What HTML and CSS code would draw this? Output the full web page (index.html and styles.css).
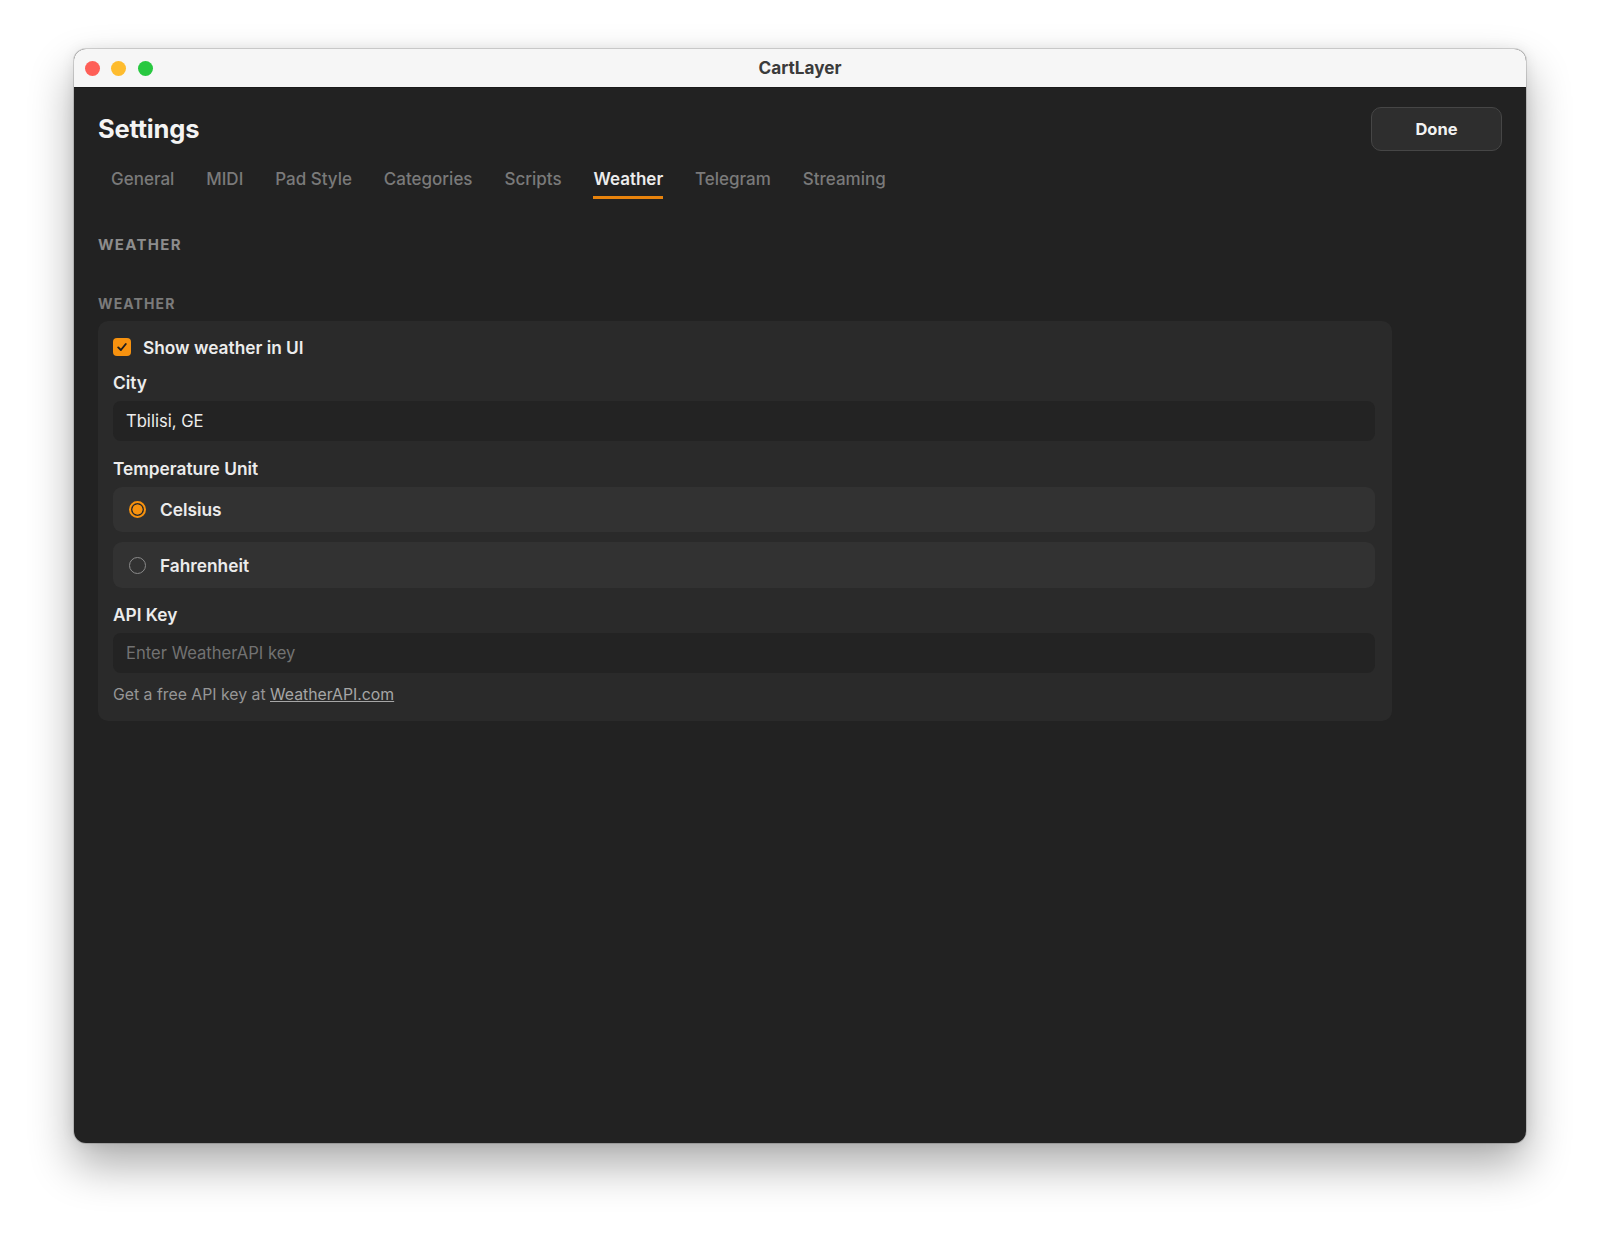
FILE: index.html
```html
<!DOCTYPE html>
<html lang="en">
<head>
<meta charset="utf-8">
<title>CartLayer</title>
<link rel="stylesheet" href="styles.css">
</head>
<body>
<div class="window">
  <div class="titlebar">
    <div class="lights">
      <span class="light red"></span>
      <span class="light yellow"></span>
      <span class="light green"></span>
    </div>
    <div class="wtitle">CartLayer</div>
  </div>
  <div class="content">
    <div class="header">
      <h1 class="title">Settings</h1>
      <button class="done">Done</button>
    </div>
    <nav class="tabs">
      <span class="tab">General</span>
      <span class="tab">MIDI</span>
      <span class="tab">Pad Style</span>
      <span class="tab">Categories</span>
      <span class="tab">Scripts</span>
      <span class="tab active">Weather</span>
      <span class="tab">Telegram</span>
      <span class="tab">Streaming</span>
    </nav>
    <div class="section-title">WEATHER</div>
    <div class="group-title">WEATHER</div>
    <div class="card">
      <label class="check-row">
        <span class="checkbox">
          <svg width="12" height="12" viewBox="0 0 12 12"><path d="M2.2 6.4 L4.9 9 L9.8 3" fill="none" stroke="#1e1e1e" stroke-width="1.9" stroke-linecap="round" stroke-linejoin="round"/></svg>
        </span>
        <span class="check-label">Show weather in UI</span>
      </label>
      <div class="label city-label">City</div>
      <div class="input">Tbilisi, GE</div>
      <div class="label temp-label">Temperature Unit</div>
      <div class="radio-row">
        <span class="radio on"></span>
        <span class="radio-label">Celsius</span>
      </div>
      <div class="radio-row second">
        <span class="radio"></span>
        <span class="radio-label">Fahrenheit</span>
      </div>
      <div class="label api-label">API Key</div>
      <div class="input placeholder">Enter WeatherAPI key</div>
      <div class="helper">Get a free API key at <a class="link">WeatherAPI.com</a></div>
    </div>
  </div>
</div>
</body>
</html>
```

FILE: styles.css
```css
html, body {
  margin: 0;
  padding: 0;
  background: #ffffff;
}
body {
  font-family: "Inter", "Liberation Sans", sans-serif;
  width: 1600px;
  height: 1241px;
  overflow: hidden;
}
.window {
  margin: 49px 0 0 74px;
  width: 1452px;
  height: 1094px;
  border-radius: 12px;
  overflow: hidden;
  background: #222222;
  box-shadow: 0 0 0 1px rgba(0,0,0,0.14), 0 22px 45px rgba(0,0,0,0.33), 0 0 14px rgba(0,0,0,0.08);
  display: flex;
  flex-direction: column;
}
.titlebar {
  height: 38px;
  background: #f6f6f6;
  border-bottom: 1px solid #1a1a1a;
  display: flex;
  align-items: center;
  position: relative;
  flex-shrink: 0;
}
.lights {
  display: flex;
  gap: 11.5px;
  margin-left: 10.5px;
  margin-top: 1px;
}
.light {
  width: 15px;
  height: 15px;
  border-radius: 50%;
}
.red { background: #fe5f57; }
.yellow { background: #febc2e; }
.green { background: #28c840; }
.wtitle {
  position: absolute;
  left: 0;
  right: 0;
  top: 9px;
  text-align: center;
  font-weight: 700;
  font-size: 17.2px;
  color: #3b3b3b;
  line-height: 20px;
}
.content {
  padding: 18px 24px 0 24px;
}
.header {
  display: flex;
  justify-content: space-between;
  align-items: center;
  height: 44px;
}
.title {
  margin: 1px 0 0 0;
  font-size: 25.5px;
  font-weight: 700;
  color: #f4f4f4;
  letter-spacing: -0.2px;
}
.done {
  width: 131px;
  height: 44px;
  margin-top: 1px;
  border-radius: 10px;
  background: #2e2e2e;
  border: 1px solid #464646;
  color: #f2f2f2;
  font-family: inherit;
  font-size: 16.5px;
  font-weight: 700;
}
.tabs {
  display: flex;
  margin-top: 18px;
}
.tab {
  padding: 0 15.95px 6px;
  font-size: 17px;
  line-height: 22px;
  color: #7a7a7a;
  font-weight: 500;
  border-bottom: 3px solid transparent;
}
.tabs .tab:first-child { padding-left: 13px; }
.tab.active {
  color: #ececec;
  font-weight: 600;
  border-bottom-color: #e8830c;
  padding-left: 0;
  padding-right: 0;
  margin: 0 15.95px;
}
.section-title {
  margin-top: 36px;
  font-size: 15px;
  font-weight: 700;
  letter-spacing: 1.3px;
  color: #8d8d8d;
  line-height: 20px;
}
.group-title {
  margin-top: 40px;
  font-size: 14px;
  font-weight: 700;
  letter-spacing: 1.1px;
  color: #7b7b7b;
  line-height: 18px;
}
.card {
  margin-top: 8px;
  width: 1294px;
  box-sizing: border-box;
  background: #2a2a2a;
  border-radius: 10px;
  padding: 15px 17px 16px 15px;
  display: flex;
  flex-direction: column;
}
.check-row {
  display: flex;
  align-items: center;
  height: 22px;
}
.checkbox {
  width: 18px;
  height: 18px;
  border-radius: 4px;
  background: #f7920f;
  display: flex;
  align-items: center;
  justify-content: center;
}
.check-label {
  margin-left: 12px;
  font-size: 17.3px;
  font-weight: 600;
  color: #ececec;
}
.label {
  font-size: 17.3px;
  font-weight: 600;
  color: #ececec;
  line-height: 22px;
}
.city-label { margin-top: 14px; }
.temp-label { margin-top: 17px; }
.api-label { margin-top: 16px; }
.input {
  margin-top: 7px;
  height: 40px;
  border-radius: 8px;
  background: #232323;
  display: flex;
  align-items: center;
  padding-left: 13px;
  font-size: 16.6px;
  color: #ececec;
}
.input.placeholder { color: #727272; }
.radio-row {
  margin-top: 7px;
  height: 45px;
  border-radius: 9px;
  background: #323232;
  display: flex;
  align-items: center;
  padding-left: 16px;
}
.radio-row.second {
  margin-top: 10px;
  height: 46px;
}
.radio {
  width: 17px;
  height: 17px;
  box-sizing: border-box;
  border-radius: 50%;
  border: 1.5px solid #8a8a8a;
}
.radio.on {
  border: 2px solid #f7920f;
  background: radial-gradient(circle, #f7920f 0 4.8px, #2a2a2a 5.3px);
}
.radio-label {
  margin-left: 14px;
  font-size: 17.3px;
  font-weight: 600;
  color: #ececec;
}
.helper {
  margin-top: 12px;
  font-size: 15.8px;
  line-height: 20px;
  color: #969696;
}
.link {
  color: #a6a6a6;
  text-decoration: underline;
}
```
